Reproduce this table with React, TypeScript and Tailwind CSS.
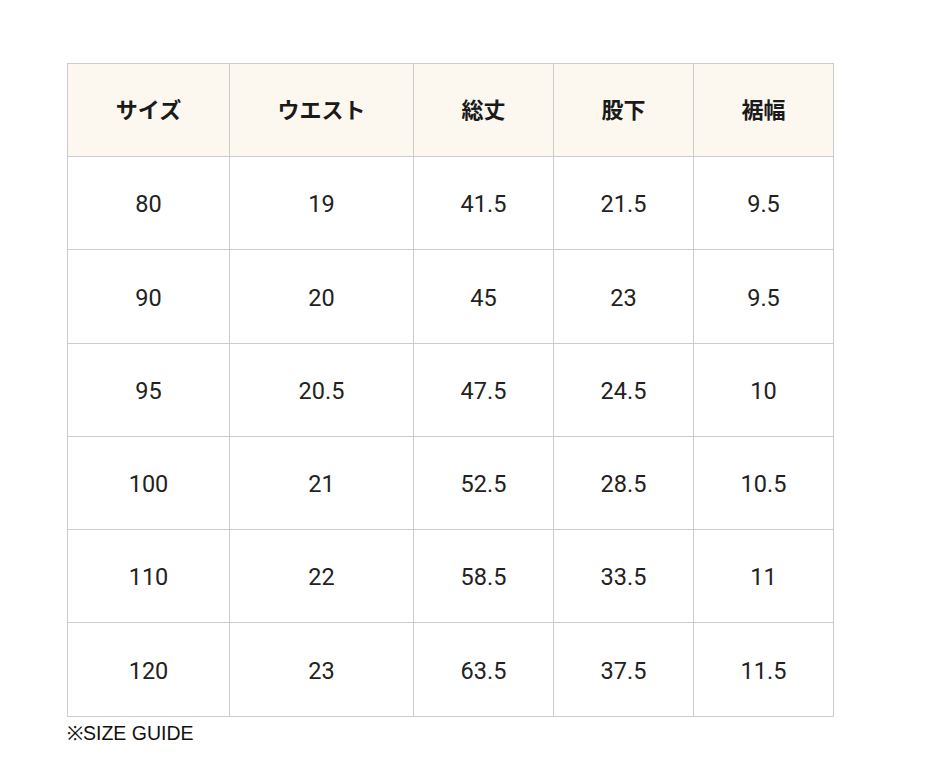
import React from "react";

const headers = ["サイズ", "ウエスト", "総丈", "股下", "裾幅"];
const rows = [
  ["80", "19", "41.5", "21.5", "9.5"],
  ["90", "20", "45", "23", "9.5"],
  ["95", "20.5", "47.5", "24.5", "10"],
  ["100", "21", "52.5", "28.5", "10.5"],
  ["110", "22", "58.5", "33.5", "11"],
  ["120", "23", "63.5", "37.5", "11.5"],
];
const widths = ["w-[162px]", "w-[184px]", "w-[140px]", "w-[140px]", "w-[140px]"];
const heights = ["h-[93px]", "h-[94px]", "h-[93px]", "h-[93px]", "h-[93px]", "h-[94px]"];

export default function App() {
  return (
    <div className="min-h-[774px] bg-white pl-[67px] pt-[63px] text-[#1a1a1a]" style={{ fontFamily: '"Noto Sans CJK JP", "Noto Sans", sans-serif' }}>
      <table className="border-collapse table-fixed w-[767px]">
        <thead>
          <tr>
            {headers.map((h, i) => (
              <th key={h} className={`${widths[i]} h-[93px] border border-[#cccccc] bg-[#fcf8f0] pb-[4px] text-[22px] font-bold text-center align-middle`}>
                {h}
              </th>
            ))}
          </tr>
        </thead>
        <tbody>
          {rows.map((r, ri) => (
            <tr key={ri} className={heights[ri]}>
              {r.map((c, ci) => (
                <td key={ci} className="border border-[#cccccc] pt-[4px] text-[23.5px] font-normal text-center align-middle text-[#222]" style={{ fontFamily: 'Roboto, "Noto Sans", sans-serif' }}>
                  {c}
                </td>
              ))}
            </tr>
          ))}
        </tbody>
      </table>
      <div className="mt-[4px] text-[19.5px] leading-[24px] text-[#111]" style={{ fontFamily: '"Liberation Sans", Arial, sans-serif' }}>
        ※SIZE GUIDE
      </div>
    </div>
  );
}
